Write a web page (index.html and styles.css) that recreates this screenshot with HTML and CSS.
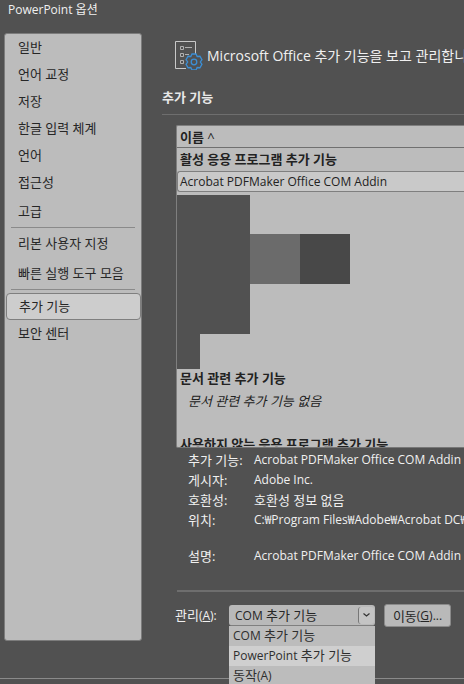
FILE: index.html
```html
<!DOCTYPE html>
<html lang="ko">
<head>
<meta charset="UTF-8">
<meta name="viewport" content="width=device-width, initial-scale=1.0">
<title>PowerPoint 옵션</title>
<link rel="stylesheet" href="styles.css">
</head>
<body>

<div class="title">PowerPoint 옵션</div>

<div class="main">
    <!-- left menu -->
    <div class="side">
        <div class="side-item h27">일반</div>
        <div class="side-item h27">언어 교정</div>
        <div class="side-item h27">저장</div>
        <div class="side-item h27">한글 입력 체계</div>
        <div class="side-item h27">언어</div>
        <div class="side-item h27">접근성</div>
        <div class="side-item h31">고급</div>
        <div class="side-line"></div>
        <div class="side-item h32">리본 사용자 지정</div>
        <div class="side-item h27">빠른 실행 도구 모음</div>
        <div class="side-line"></div>
        <div class="side-item side-on">추가 기능</div>
        <div class="side-item h27">보안 센터</div>
    </div>

    <div class="content">
        <div class="head">
            <svg class="head-icon" viewBox="0 0 28 30" width="28" height="30">
                <path d="M.5 .5H20.500V13M11 27.500H.5V.5" fill="none" stroke="#c8c8c8"/>
                <path d="M5.500 5.500H8.500V8.500H5.500ZM5.500 12.500H8.500V15.500H5.500ZM5.500 19.500H8.500V22.500H5.500Z" fill="none" stroke="#b0b0b0"/>
                <path d="M10 6.500H17M10 13.500H14" fill="none" stroke="#b0b0b0"/>
                <path d="M17 13H21L22.200 15.500L24.930 15.270L26.930 18.730L25.360 21L26.930 23.270L24.930 26.730L22.160 26.500L21 29H17L15.800 26.500L13.070 26.730L11.070 23.270L12.640 21L11.070 18.730L13.070 15.270L15.800 15.500Z" fill="#515151" stroke="#3b8fd6" stroke-width="1.300"/>
                <circle cx="19" cy="21" r="2.800" fill="none" stroke="#3b8fd6" stroke-width="1.300"/>
            </svg>
            <span class="head-text">Microsoft Office 추가 기능을 보고 관리합니다.</span>
        </div>

        <div class="section">추가 기능</div>

        <div class="panel">
            <div class="col-head">이름 <span class="caret">^</span></div>
            <div class="group">활성 응용 프로그램 추가 기능</div>
            <div class="row-on en">Acrobat PDFMaker Office COM Addin</div>
            <!-- unpainted area of the list -->
            <div class="glitch">
                <div class="gl-a"></div>
                <div class="gl-b"></div>
                <div class="gl-c"></div>
                <div class="gl-d"></div>
            </div>
            <div class="group g2">문서 관련 추가 기능</div>
            <div class="none">문서 관련 추가 기능 없음</div>
            <div class="group g3">사용하지 않는 응용 프로그램 추가 기능</div>
        </div>

        <div class="info">
            <div class="info-row"><span class="info-key">추가 기능:</span><span class="en">Acrobat PDFMaker Office COM Addin</span></div>
            <div class="info-row"><span class="info-key">게시자:</span><span class="en">Adobe Inc.</span></div>
            <div class="info-row"><span class="info-key">호환성:</span><span>호환성 정보 없음</span></div>
            <div class="info-row"><span class="info-key">위치:</span><span class="en">C:₩Program Files₩Adobe₩Acrobat DC₩PDFMaker</span></div>
            <div class="info-row gap"><span class="info-key">설명:</span><span class="en">Acrobat PDFMaker Office COM Addin</span></div>
        </div>

        <div class="rule"></div>

        <div class="manage">
            <span class="manage-label">관리<span class="en">(<u>A</u>):</span></span>
            <div class="combo">
                <span><span class="en">COM</span> 추가 기능</span>
                <span class="combo-btn">
                    <svg viewBox="0 0 7 4" width="7" height="4"><path d="M.5 .5L3.500 3L6.500 .5" fill="none" stroke="#333" stroke-width="1.200"/></svg>
                </span>
                <div class="drop">
                    <div class="drop-item"><span class="en">COM</span> 추가 기능</div>
                    <div class="drop-item drop-on"><span class="en">PowerPoint</span> 추가 기능</div>
                    <div class="drop-item">동작<span class="en">(A)</span></div>
                </div>
            </div>
            <div class="go">이동<span class="en">(<u>G</u>)...</span></div>
        </div>
    </div>
</div>

<div class="foot-line"></div>

</body>
</html>
```

FILE: styles.css
```css
* {
  box-sizing: border-box;
}
html, body {
  margin: 0;
  height: 100%;
}
body {
  width: 464px;
  height: 684px;
  overflow: hidden;
  background-color: #515151;
  color: #f0f0f0;
  font-family: "Open Sans", "Noto Sans CJK KR", sans-serif;
  font-size: 13px;
  line-height: 16px;
}
/* latin text runs a size smaller than the hangul next to it */
.en {
  font-size: 12px;
}
.title {
  height: 33px;
  padding: 2px 0 0 8px;
  font-size: 12px;
}
.main {
  display: flex;
  align-items: flex-start;
}

/* left menu */
.side {
  width: 138px;
  height: 608px;
  margin-left: 4px;
  background-color: #bcbcbc;
  border: 1px solid #7c7c7c;
  border-radius: 3px;
  color: #262626;
  flex: none;
}
.side-item {
  display: flex;
  align-items: center;
  padding: 0 0 2px 13px;
}
.h27 {
  height: 27px;
}
.h31 {
  height: 31px;
}
.h32 {
  height: 32px;
}
.side-line {
  height: 1px;
  margin: 0 6px;
  background-color: #8a8a8a;
}
.h27 + .side-line {
  margin-top: 2px;
}
.side-on {
  height: 27px;
  margin: 3px 0 0 1px;
  width: 135px;
  background-color: #cdcdcd;
  border: 1px solid #7f7f7f;
  border-radius: 4px;
  padding-left: 12px;
}

.content {
  width: 302px;
  margin-left: 20px;
  flex: none;
}
.head {
  display: flex;
  align-items: center;
  gap: 4px;
  height: 37px;
  padding: 8px 0 0 13px;
  white-space: nowrap;
  overflow: hidden;
}
.head-icon {
  flex: none;
}
.head-text {
  font-size: 14px;
}
.section {
  height: 45px;
  padding-top: 19px;
  border-bottom: 1px solid #6e6e6e;
  font-weight: 700;
  color: #e8e8e8;
}

/* list, runs on past the window edge */
.panel {
  height: 323px;
  margin: 10px 0 0 14px;
  background-color: #bcbcbc;
  border: 1px solid #7f7f7f;
  border-right: 0;
  border-bottom-color: #777;
  border-radius: 2px 0 0 2px;
  color: #222;
  overflow: hidden;
}
.col-head {
  height: 22px;
  padding: 3px 0 0 3px;
  border-bottom: 1px solid #707070;
  font-weight: 700;
}
.caret {
  font-weight: 400;
}
.group {
  height: 23px;
  padding: 3px 0 0 3px;
  font-weight: 700;
  white-space: nowrap;
}
.row-on {
  height: 21px;
  padding: 2px 0 0 2px;
  background-color: #c9c9c9;
  border: 1px solid #7f7f7f;
  border-radius: 3px 0 0 3px;
  border-right: 0;
}
.glitch {
  display: grid;
  grid-template-columns: 23px 50px 50px 50px;
  grid-template-rows: 39px 50px 50px 35px;
  height: 174px;
  margin-top: 3px;
}
.gl-a {
  grid-column: 1 / 3;
  grid-row: 1 / 4;
  background-color: #515151;
}
.gl-b {
  grid-column: 3;
  grid-row: 2;
  background-color: #6b6b6b;
}
.gl-c {
  grid-column: 4;
  grid-row: 2;
  background-color: #484848;
}
.gl-d {
  grid-column: 1;
  grid-row: 4;
  background-color: #515151;
}
.g2 {
  height: 21px;
  padding-top: 1px;
}
.none {
  height: 24px;
  padding: 3px 0 0 11px;
  font-style: italic;
}
.g3 {
  margin-top: 18px;
  padding-top: 4px;
}

/* details under the list */
.info {
  margin: 2px 0 0 26px;
  overflow: hidden;
}
.info-row {
  display: flex;
  height: 20px;
  align-items: center;
  white-space: nowrap;
}
.info-key {
  width: 66px;
  flex: none;
}
.gap {
  margin-top: 16px;
}
.rule {
  height: 2px;
  margin: 24px 0 0 15px;
  background-color: #6e6e6e;
}
.manage {
  display: flex;
  align-items: center;
  margin: 12px 0 0 13px;
  height: 23px;
}
.manage-label {
  width: 54px;
  flex: none;
}
.combo {
  position: relative;
  display: flex;
  align-items: center;
  justify-content: space-between;
  width: 146px;
  height: 21px;
  padding: 0 1px 0 6px;
  background-color: #b9b9b9;
  border-bottom: 1px solid #7f7f7f;
  border-radius: 3px;
  color: #262626;
}
.combo-btn {
  display: flex;
  align-items: center;
  justify-content: center;
  width: 16px;
  height: 17px;
  background-color: #c4c4c4;
  border-left: 1px solid #777;
  border-radius: 3px;
}
.drop {
  position: absolute;
  left: 0;
  top: 21px;
  z-index: 2;
  width: 146px;
  background-color: #bcbcbc;
  color: #2e2e2e;
}
.drop-item {
  height: 20px;
  padding: 1px 0 0 4px;
  white-space: nowrap;
}
.drop-on {
  background-color: #cfcfcf;
}
.go {
  display: flex;
  align-items: center;
  justify-content: center;
  width: 67px;
  height: 23px;
  margin-left: 9px;
  background-color: #b9b9b9;
  border: 1px solid #8a8a8a;
  border-radius: 3px;
  color: #262626;
}
.foot-line {
  position: absolute;
  left: 0;
  top: 678px;
  width: 464px;
  height: 1px;
  background-color: #8a8a8a;
}
```
